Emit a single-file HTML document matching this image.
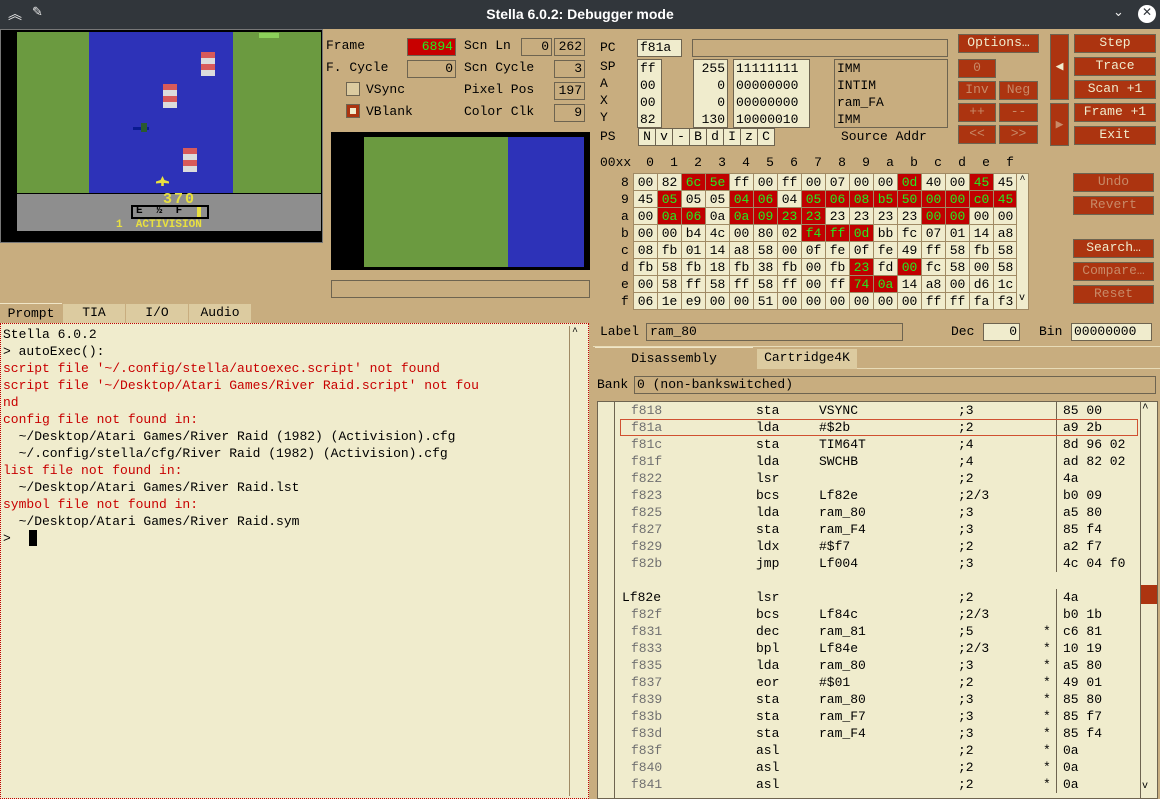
<!DOCTYPE html>
<html><head><meta charset="utf-8"><style>
*{margin:0;padding:0;box-sizing:border-box}
body{width:1160px;height:799px;background:#c8ad7f;font:13px "Liberation Mono",monospace;color:#000;position:relative;overflow:hidden}
.a{position:absolute;white-space:pre}
.n{position:absolute}
.f{position:absolute;background:#f0eccd;border:1px solid #6e6450;height:18px;line-height:16px;padding:0 2px;white-space:pre}
.fr{text-align:right}
.e{position:absolute;border:1px solid #6e6450;height:18px}
.b{position:absolute;background:#ac3410;border:1px solid #6e6450;color:#f0eccd;text-align:center;line-height:16px;height:19px}
.bd{color:#c88a68}
table{border-collapse:collapse}
#ram td{width:24px;height:17px;border:1px solid #a08a64;background:#f0eccd;text-align:center;line-height:15px;padding:0}
#ram td.r{background:#c00000;color:#22ee22}
.dl{position:absolute;left:0;width:540px;height:17px;line-height:17px}
.dl span{position:absolute;white-space:pre}
.ad{left:33px;color:#707070}
.mn{left:158px}.op{left:221px}.cy{left:360px}.st{left:445px}.by{left:465px}
.pl{height:17px;line-height:17px;white-space:pre}
.red{color:#c80000}
.tab{position:absolute;background:#dccba0;text-align:center;line-height:18px;height:20px}
.hd{position:absolute;top:155px;width:24px;text-align:center}
.ps{position:absolute;top:128px;width:18px;height:18px;background:#f0eccd;border:1px solid #6e6450;text-align:center;line-height:16px}
</style></head><body>
<!-- title bar -->
<div class="a" style="left:0;top:0;width:1160px;height:29px;background:#31363b"></div>
<div class="a" style="left:0;top:6px;width:1160px;text-align:center;color:#fff;font:bold 14px 'Liberation Sans',sans-serif;line-height:16px">Stella 6.0.2: Debugger mode</div>
<div class="a" style="left:8px;top:4px;color:#eee;font:14px 'DejaVu Sans',sans-serif">︽</div>
<div class="a" style="left:32px;top:5px;color:#eee;font:13px 'DejaVu Sans',sans-serif">✎</div>
<div class="a" style="left:1113px;top:5px;color:#eee;font:13px 'DejaVu Sans',sans-serif">⌄</div>
<div class="a" style="left:1138px;top:5px;width:18px;height:18px;border-radius:9px;background:#fff;color:#31363b;text-align:center;line-height:18px;font:bold 12px 'DejaVu Sans',sans-serif">✕</div>

<!-- TIA display -->
<div class="a" style="left:0;top:29px;width:323px;height:214px;background:#000;border:1px solid #777"></div>
<div class="a" style="left:17px;top:32px;width:72px;height:161px;background:#6b9a40"></div>
<div class="a" style="left:89px;top:32px;width:144px;height:161px;background:#2d32b8"></div>
<div class="a" style="left:233px;top:32px;width:88px;height:161px;background:#6b9a40"></div>
<div class="a" style="left:259px;top:33px;width:20px;height:5px;background:#8cd05a"></div>
<div class="a" style="left:17px;top:194px;width:304px;height:37px;background:#8e8e8e"></div>
<div class="a" style="left:201px;top:52px;width:14px;height:24px;background:repeating-linear-gradient(#d85a5a 0 6px,#dcdcdc 6px 12px)"></div>
<div class="a" style="left:163px;top:84px;width:14px;height:24px;background:repeating-linear-gradient(#d85a5a 0 6px,#dcdcdc 6px 12px)"></div>
<div class="a" style="left:183px;top:148px;width:14px;height:24px;background:repeating-linear-gradient(#d85a5a 0 6px,#dcdcdc 6px 12px)"></div>
<div class="a" style="left:133px;top:127px;width:16px;height:3px;background:#0a1a90"></div>
<div class="a" style="left:141px;top:123px;width:6px;height:9px;background:#2a5a30"></div>
<div class="a" style="left:156px;top:176px;width:13px;height:10px;background:#e8e040;clip-path:polygon(50% 0,65% 40%,100% 55%,100% 75%,60% 70%,60% 100%,40% 100%,40% 70%,0 75%,0 55%,35% 40%)"></div>
<div class="a" style="left:163px;top:191px;color:#e8e040;font:bold 15px 'Liberation Mono',monospace;letter-spacing:2px">370</div>
<div class="a" style="left:131px;top:205px;width:78px;height:14px;border:2px solid #000"></div>
<div class="a" style="left:136px;top:205px;font:bold 11px 'Liberation Mono',monospace">E  ½  F</div>
<div class="a" style="left:197px;top:207px;width:4px;height:10px;background:#e8e040"></div>
<div class="a" style="left:116px;top:219px;color:#e8e040;font:bold 11px 'Liberation Mono',monospace;line-height:12px">1  ACTIVISION</div>

<!-- frame info -->
<div class="a" style="left:326px;top:38px">Frame</div>
<div class="f fr" style="left:407px;top:38px;width:49px;background:#c80000;color:#22ee22">6894</div>
<div class="a" style="left:326px;top:60px">F. Cycle</div>
<div class="e" style="left:407px;top:60px;width:49px;text-align:right;padding-right:2px;line-height:16px">0</div>
<div class="a" style="left:346px;top:82px;width:14px;height:14px;background:#dccba0;border:1px solid #6e6450"></div>
<div class="a" style="left:366px;top:82px">VSync</div>
<div class="a" style="left:346px;top:104px;width:14px;height:14px;background:#ac3410;border:1px solid #6e6450"></div>
<div class="a" style="left:350px;top:108px;width:6px;height:6px;background:#f0eccd"></div>
<div class="a" style="left:366px;top:104px">VBlank</div>
<div class="a" style="left:464px;top:38px">Scn Ln</div>
<div class="e" style="left:521px;top:38px;width:31px;text-align:right;padding-right:2px;line-height:16px">0</div>
<div class="e" style="left:554px;top:38px;width:31px;text-align:right;padding-right:2px;line-height:16px">262</div>
<div class="a" style="left:464px;top:60px">Scn Cycle</div>
<div class="e" style="left:554px;top:60px;width:31px;text-align:right;padding-right:2px;line-height:16px">3</div>
<div class="a" style="left:464px;top:82px">Pixel Pos</div>
<div class="e" style="left:554px;top:82px;width:31px;text-align:right;padding-right:2px;line-height:16px">197</div>
<div class="a" style="left:464px;top:104px">Color Clk</div>
<div class="e" style="left:554px;top:104px;width:31px;text-align:right;padding-right:2px;line-height:16px">9</div>
<!-- zoom -->
<div class="a" style="left:331px;top:132px;width:259px;height:138px;background:#000"></div>
<div class="a" style="left:364px;top:137px;width:144px;height:130px;background:#6b9a40"></div>
<div class="a" style="left:508px;top:137px;width:76px;height:130px;background:#2d32b8"></div>
<div class="e" style="left:331px;top:280px;width:259px"></div>

<!-- CPU -->
<div class="a" style="left:600px;top:40px">PC</div>
<div class="f" style="left:637px;top:39px;width:45px">f81a</div>
<div class="e" style="left:692px;top:39px;width:256px"></div>
<div class="a" style="left:600px;top:58px;line-height:17px">SP
A
X
Y</div>
<div class="f" style="left:637px;top:59px;width:25px;height:69px;line-height:17px;padding:0 2px">ff
00
00
82</div>
<div class="f" style="left:693px;top:59px;width:35px;height:69px;line-height:17px;text-align:right">255
  0
  0
130</div>
<div class="f" style="left:733px;top:59px;width:77px;height:69px;line-height:17px">11111111
00000000
00000000
10000010</div>
<div class="e" style="left:834px;top:59px;width:114px;height:69px;line-height:17px;padding:0 2px;white-space:pre">IMM
INTIM
ram_FA
IMM</div>
<div class="a" style="left:600px;top:129px">PS</div>
<div class="ps" style="left:638px">N</div><div class="ps" style="left:655px">v</div><div class="ps" style="left:672px">-</div><div class="ps" style="left:689px">B</div><div class="ps" style="left:706px">d</div><div class="ps" style="left:723px">I</div><div class="ps" style="left:740px">z</div><div class="ps" style="left:757px">C</div>
<div class="a" style="left:841px;top:129px">Source Addr</div>
<div class="b" style="left:958px;top:34px;width:81px">Options…</div>
<div class="b bd" style="left:958px;top:59px;width:38px">0</div>
<div class="b bd" style="left:958px;top:81px;width:38px">Inv</div>
<div class="b bd" style="left:999px;top:81px;width:39px">Neg</div>
<div class="b bd" style="left:958px;top:103px;width:38px">++</div>
<div class="b bd" style="left:999px;top:103px;width:39px">--</div>
<div class="b bd" style="left:958px;top:125px;width:38px">&lt;&lt;</div>
<div class="b bd" style="left:999px;top:125px;width:39px">&gt;&gt;</div>
<div class="b" style="left:1050px;top:34px;width:19px;height:66px;line-height:64px">◀</div>
<div class="b bd" style="left:1050px;top:103px;width:19px;height:43px;line-height:41px">▶</div>
<div class="b" style="left:1074px;top:34px;width:82px">Step</div>
<div class="b" style="left:1074px;top:57px;width:82px">Trace</div>
<div class="b" style="left:1074px;top:80px;width:82px">Scan +1</div>
<div class="b" style="left:1074px;top:103px;width:82px">Frame +1</div>
<div class="b" style="left:1074px;top:126px;width:82px">Exit</div>

<!-- RAM -->
<div class="a" style="left:600px;top:155px">00xx</div>
<div class="hd" style="left:638px">0</div><div class="hd" style="left:662px">1</div><div class="hd" style="left:686px">2</div><div class="hd" style="left:710px">3</div><div class="hd" style="left:734px">4</div><div class="hd" style="left:758px">5</div><div class="hd" style="left:782px">6</div><div class="hd" style="left:806px">7</div><div class="hd" style="left:830px">8</div><div class="hd" style="left:854px">9</div><div class="hd" style="left:878px">a</div><div class="hd" style="left:902px">b</div><div class="hd" style="left:926px">c</div><div class="hd" style="left:950px">d</div><div class="hd" style="left:974px">e</div><div class="hd" style="left:998px">f</div>
<div class="a" style="left:621px;top:174px;line-height:17px">8
9
a
b
c
d
e
f</div>
<table id="ram" class="n" style="left:633px;top:173px">
<tr><td>00</td><td>82</td><td class="r">6c</td><td class="r">5e</td><td>ff</td><td>00</td><td>ff</td><td>00</td><td>07</td><td>00</td><td>00</td><td class="r">0d</td><td>40</td><td>00</td><td class="r">45</td><td>45</td></tr>
<tr><td>45</td><td class="r">05</td><td>05</td><td>05</td><td class="r">04</td><td class="r">06</td><td>04</td><td class="r">05</td><td class="r">06</td><td class="r">08</td><td class="r">b5</td><td class="r">50</td><td class="r">00</td><td class="r">00</td><td class="r">c0</td><td class="r">45</td></tr>
<tr><td>00</td><td class="r">0a</td><td class="r">06</td><td>0a</td><td class="r">0a</td><td class="r">09</td><td class="r">23</td><td class="r">23</td><td>23</td><td>23</td><td>23</td><td>23</td><td class="r">00</td><td class="r">00</td><td>00</td><td>00</td></tr>
<tr><td>00</td><td>00</td><td>b4</td><td>4c</td><td>00</td><td>80</td><td>02</td><td class="r">f4</td><td class="r">ff</td><td class="r">0d</td><td>bb</td><td>fc</td><td>07</td><td>01</td><td>14</td><td>a8</td></tr>
<tr><td>08</td><td>fb</td><td>01</td><td>14</td><td>a8</td><td>58</td><td>00</td><td>0f</td><td>fe</td><td>0f</td><td>fe</td><td>49</td><td>ff</td><td>58</td><td>fb</td><td>58</td></tr>
<tr><td>fb</td><td>58</td><td>fb</td><td>18</td><td>fb</td><td>38</td><td>fb</td><td>00</td><td>fb</td><td class="r">23</td><td>fd</td><td class="r">00</td><td>fc</td><td>58</td><td>00</td><td>58</td></tr>
<tr><td>00</td><td>58</td><td>ff</td><td>58</td><td>ff</td><td>58</td><td>ff</td><td>00</td><td>ff</td><td class="r">74</td><td class="r">0a</td><td>14</td><td>a8</td><td>00</td><td>d6</td><td>1c</td></tr>
<tr><td>06</td><td>1e</td><td>e9</td><td>00</td><td>00</td><td>51</td><td>00</td><td>00</td><td>00</td><td>00</td><td>00</td><td>00</td><td>ff</td><td>ff</td><td>fa</td><td>f3</td></tr>
</table>
<div class="a" style="left:1016px;top:173px;width:13px;height:137px;background:#f0eccd;border:1px solid #a08a64;font-size:10px;text-align:center;line-height:14px">^</div>
<div class="a" style="left:1019px;top:293px;font-size:10px">v</div>
<div class="b bd" style="left:1073px;top:173px;width:81px">Undo</div>
<div class="b bd" style="left:1073px;top:196px;width:81px">Revert</div>
<div class="b" style="left:1073px;top:239px;width:81px">Search…</div>
<div class="b bd" style="left:1073px;top:262px;width:81px">Compare…</div>
<div class="b bd" style="left:1073px;top:285px;width:81px">Reset</div>

<div class="a" style="left:600px;top:324px">Label</div>
<div class="e" style="left:646px;top:323px;width:257px;line-height:16px;padding-left:3px">ram_80</div>
<div class="a" style="left:951px;top:324px">Dec</div>
<div class="f fr" style="left:983px;top:323px;width:37px">0</div>
<div class="a" style="left:1039px;top:324px">Bin</div>
<div class="f" style="left:1071px;top:323px;width:81px">00000000</div>

<!-- disassembly tabs -->
<div class="a" style="left:593px;top:346px;width:567px;height:1px;background:#e8dcb8"></div>
<div class="a" style="left:595px;top:347px;width:158px;height:21px;border-top:1px solid #f0e6c8;text-align:center;line-height:21px">Disassembly</div>
<div class="tab" style="left:757px;top:349px;width:100px">Cartridge4K</div>
<div class="a" style="left:857px;top:368px;width:303px;height:1px;background:#e8dcb8"></div>
<div class="a" style="left:597px;top:377px">Bank</div>
<div class="e" style="left:634px;top:376px;width:522px;line-height:16px;padding-left:2px;white-space:pre">0 (non-bankswitched)</div>
<div class="a" style="left:597px;top:401px;width:561px;height:398px;background:#f0eccd;border:1px solid #6e6450"></div>
<div class="a" style="left:614px;top:402px;width:1px;height:396px;background:#6e6450"></div>
<div class="a" style="left:1056px;top:402px;width:1px;height:170px;background:#6e6450"></div>
<div class="a" style="left:1056px;top:589px;width:1px;height:204px;background:#6e6450"></div>
<div class="a" style="left:1140px;top:402px;width:1px;height:396px;background:#6e6450"></div>
<div class="a" style="left:1142px;top:403px;font-size:11px">^</div>
<div class="a" style="left:1142px;top:781px;font-size:10px">v</div>
<div class="a" style="left:1141px;top:585px;width:16px;height:19px;background:#ac3410"></div>
<div class="a" style="left:620px;top:419px;width:518px;height:17px;border:1px solid #d05030"></div>
<div class="n" style="left:598px;top:402px;width:540px;height:395px">
<div class="dl" style="top:0"><span class="ad">f818</span><span class="mn">sta</span><span class="op">VSYNC</span><span class="cy">;3</span><span class="by">85 00</span></div>
<div class="dl" style="top:17px"><span class="ad">f81a</span><span class="mn">lda</span><span class="op">#$2b</span><span class="cy">;2</span><span class="by">a9 2b</span></div>
<div class="dl" style="top:34px"><span class="ad">f81c</span><span class="mn">sta</span><span class="op">TIM64T</span><span class="cy">;4</span><span class="by">8d 96 02</span></div>
<div class="dl" style="top:51px"><span class="ad">f81f</span><span class="mn">lda</span><span class="op">SWCHB</span><span class="cy">;4</span><span class="by">ad 82 02</span></div>
<div class="dl" style="top:68px"><span class="ad">f822</span><span class="mn">lsr</span><span class="cy">;2</span><span class="by">4a</span></div>
<div class="dl" style="top:85px"><span class="ad">f823</span><span class="mn">bcs</span><span class="op">Lf82e</span><span class="cy">;2/3</span><span class="by">b0 09</span></div>
<div class="dl" style="top:102px"><span class="ad">f825</span><span class="mn">lda</span><span class="op">ram_80</span><span class="cy">;3</span><span class="by">a5 80</span></div>
<div class="dl" style="top:119px"><span class="ad">f827</span><span class="mn">sta</span><span class="op">ram_F4</span><span class="cy">;3</span><span class="by">85 f4</span></div>
<div class="dl" style="top:136px"><span class="ad">f829</span><span class="mn">ldx</span><span class="op">#$f7</span><span class="cy">;2</span><span class="by">a2 f7</span></div>
<div class="dl" style="top:153px"><span class="ad">f82b</span><span class="mn">jmp</span><span class="op">Lf004</span><span class="cy">;3</span><span class="by">4c 04 f0</span></div>
<div class="dl" style="top:187px"><span style="left:24px">Lf82e</span><span class="mn">lsr</span><span class="cy">;2</span><span class="by">4a</span></div>
<div class="dl" style="top:204px"><span class="ad">f82f</span><span class="mn">bcs</span><span class="op">Lf84c</span><span class="cy">;2/3</span><span class="by">b0 1b</span></div>
<div class="dl" style="top:221px"><span class="ad">f831</span><span class="mn">dec</span><span class="op">ram_81</span><span class="cy">;5</span><span class="st">*</span><span class="by">c6 81</span></div>
<div class="dl" style="top:238px"><span class="ad">f833</span><span class="mn">bpl</span><span class="op">Lf84e</span><span class="cy">;2/3</span><span class="st">*</span><span class="by">10 19</span></div>
<div class="dl" style="top:255px"><span class="ad">f835</span><span class="mn">lda</span><span class="op">ram_80</span><span class="cy">;3</span><span class="st">*</span><span class="by">a5 80</span></div>
<div class="dl" style="top:272px"><span class="ad">f837</span><span class="mn">eor</span><span class="op">#$01</span><span class="cy">;2</span><span class="st">*</span><span class="by">49 01</span></div>
<div class="dl" style="top:289px"><span class="ad">f839</span><span class="mn">sta</span><span class="op">ram_80</span><span class="cy">;3</span><span class="st">*</span><span class="by">85 80</span></div>
<div class="dl" style="top:306px"><span class="ad">f83b</span><span class="mn">sta</span><span class="op">ram_F7</span><span class="cy">;3</span><span class="st">*</span><span class="by">85 f7</span></div>
<div class="dl" style="top:323px"><span class="ad">f83d</span><span class="mn">sta</span><span class="op">ram_F4</span><span class="cy">;3</span><span class="st">*</span><span class="by">85 f4</span></div>
<div class="dl" style="top:340px"><span class="ad">f83f</span><span class="mn">asl</span><span class="cy">;2</span><span class="st">*</span><span class="by">0a</span></div>
<div class="dl" style="top:357px"><span class="ad">f840</span><span class="mn">asl</span><span class="cy">;2</span><span class="st">*</span><span class="by">0a</span></div>
<div class="dl" style="top:374px"><span class="ad">f841</span><span class="mn">asl</span><span class="cy">;2</span><span class="st">*</span><span class="by">0a</span></div>
</div>

<!-- prompt tabs -->
<div class="a" style="left:0;top:303px;width:62px;height:20px;border-top:1px solid #f0e6c8;text-align:center;line-height:19px">Prompt</div>
<div class="tab" style="left:63px;top:304px;width:62px">TIA</div>
<div class="tab" style="left:126px;top:304px;width:62px">I/O</div>
<div class="tab" style="left:189px;top:304px;width:62px">Audio</div>
<div class="a" style="left:0;top:323px;width:589px;height:476px;background:#f0eccd;border:1px dotted #c00000"></div>
<div class="a" style="left:569px;top:326px;width:1px;height:470px;background:#a08a64"></div>
<div class="a" style="left:572px;top:327px;font-size:10px">^</div>
<div class="n" style="left:3px;top:326px"><div class="pl">Stella 6.0.2</div><div class="pl">&gt; autoExec():</div><div class="pl red">script file '~/.config/stella/autoexec.script' not found</div><div class="pl red">script file '~/Desktop/Atari Games/River Raid.script' not fou</div><div class="pl red">nd</div><div class="pl red">config file not found in:</div><div class="pl">  ~/Desktop/Atari Games/River Raid (1982) (Activision).cfg</div><div class="pl">  ~/.config/stella/cfg/River Raid (1982) (Activision).cfg</div><div class="pl red">list file not found in:</div><div class="pl">  ~/Desktop/Atari Games/River Raid.lst</div><div class="pl red">symbol file not found in:</div><div class="pl">  ~/Desktop/Atari Games/River Raid.sym</div><div class="pl">&gt;</div></div>
<div class="a" style="left:29px;top:530px;width:8px;height:16px;background:#000"></div>
</body></html>
